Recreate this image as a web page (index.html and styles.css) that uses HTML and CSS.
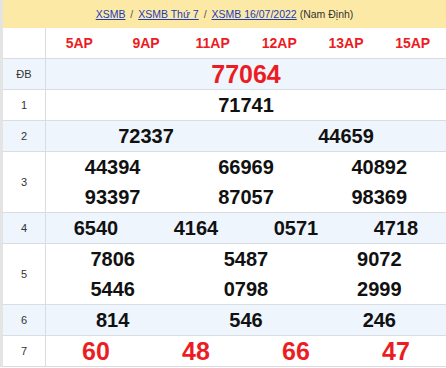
FILE: index.html
```html
<!DOCTYPE html>
<html lang="vi">
<head>
<meta charset="utf-8">
<title>XSMB 16/07/2022</title>
<link rel="stylesheet" href="styles.css">
</head>
<body>
<div class="wrap">
  <div class="crumb">
    <a href="#">XSMB</a> <span class="sep">/</span> <a href="#">XSMB Thứ 7</a> <span class="sep">/</span> <a href="#">XSMB 16/07/2022</a> <span class="place">(Nam Định)</span>
  </div>
  <div class="row head">
    <div class="lbl"></div>
    <div class="cols c6 codes"><span>5AP</span><span>9AP</span><span>11AP</span><span>12AP</span><span>13AP</span><span>15AP</span></div>
  </div>
  <div class="row alt">
    <div class="lbl">ĐB</div>
    <div class="cols c1 red big"><span>77064</span></div>
  </div>
  <div class="row">
    <div class="lbl">1</div>
    <div class="cols c1"><span>71741</span></div>
  </div>
  <div class="row alt">
    <div class="lbl">2</div>
    <div class="cols c2"><span>72337</span><span>44659</span></div>
  </div>
  <div class="row">
    <div class="lbl">3</div>
    <div class="cols c3"><span>44394</span><span>66969</span><span>40892</span><span>93397</span><span>87057</span><span>98369</span></div>
  </div>
  <div class="row alt">
    <div class="lbl">4</div>
    <div class="cols c4"><span>6540</span><span>4164</span><span>0571</span><span>4718</span></div>
  </div>
  <div class="row">
    <div class="lbl">5</div>
    <div class="cols c3"><span>7806</span><span>5487</span><span>9072</span><span>5446</span><span>0798</span><span>2999</span></div>
  </div>
  <div class="row alt">
    <div class="lbl">6</div>
    <div class="cols c3"><span>814</span><span>546</span><span>246</span></div>
  </div>
  <div class="row">
    <div class="lbl">7</div>
    <div class="cols c4 red big"><span>60</span><span>48</span><span>66</span><span>47</span></div>
  </div>
</div>
</body>
</html>
```

FILE: styles.css
```css
html, body {
  margin: 0;
  padding: 0;
  background: #ffffff;
}
body {
  font-family: "Liberation Sans", Arial, sans-serif;
  color: #111;
}
.wrap {
  border-left: 3px solid #e4e4e4;
  width: 443px;
}
.crumb {
  background: #fde9a6;
  height: 28px;
  line-height: 28px;
  text-align: center;
  font-size: 10.5px;
  color: #333;
}
.crumb a {
  color: #1b3bb8;
  text-decoration: underline;
}
.crumb .sep {
  color: #555;
  margin: 0 2px;
}
.row {
  display: grid;
  grid-template-columns: 43px 1fr;
  border-bottom: 1px solid #d9dde2;
  background: #ffffff;
}
.row.alt {
  background: #eef5fd;
}
.row.head {
  border-bottom-width: 1px;
}
.row.head .cols {
  height: 30px;
}
.lbl {
  border-right: 1px solid #d9dde2;
  display: flex;
  align-items: center;
  justify-content: center;
  font-size: 11px;
  color: #333;
}
.cols {
  display: grid;
  font-weight: bold;
  font-size: 20px;
  line-height: 30px;
  text-align: center;
}
.c1 { grid-template-columns: 1fr; }
.c2 { grid-template-columns: repeat(2, 1fr); }
.c3 { grid-template-columns: repeat(3, 1fr); }
.c4 { grid-template-columns: repeat(4, 1fr); }
.c6 { grid-template-columns: repeat(6, 1fr); }
.codes {
  font-size: 14px;
  line-height: 31px;
  color: #ec1c24;
}
.red {
  color: #ec1c24;
}
.big {
  font-size: 25px;
}
```
